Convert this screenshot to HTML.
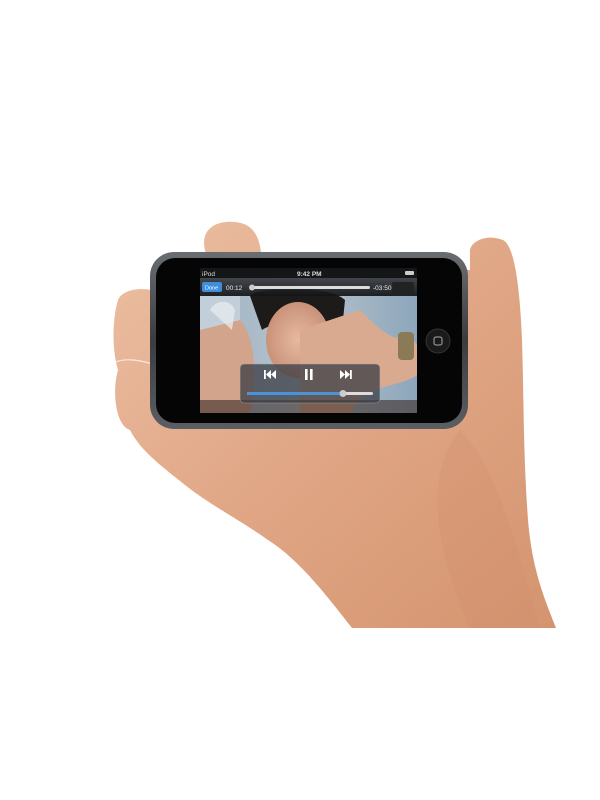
<!DOCTYPE html>
<html><head><style>
html,body{margin:0;padding:0;background:#fff;width:600px;height:800px;overflow:hidden}
svg{display:block}
text{font-family:"Liberation Sans",sans-serif}
</style></head><body>
<svg width="600" height="800" viewBox="0 0 600 800">
<defs>
<linearGradient id="skin" x1="0" y1="0" x2="1" y2="1">
<stop offset="0" stop-color="#ecbfa3"/><stop offset="0.5" stop-color="#e0a685"/><stop offset="1" stop-color="#d4946f"/>
</linearGradient>
<linearGradient id="bez" x1="0" y1="0" x2="0" y2="1">
<stop offset="0" stop-color="#6a6d72"/><stop offset="0.5" stop-color="#3a3c40"/><stop offset="1" stop-color="#5b5e63"/>
</linearGradient>
<linearGradient id="vid" x1="0" y1="0" x2="1" y2="0">
<stop offset="0" stop-color="#9fb4c4"/><stop offset="0.5" stop-color="#b7c3cc"/><stop offset="1" stop-color="#8da6bb"/>
</linearGradient>
<linearGradient id="bar" x1="0" y1="0" x2="0" y2="1">
<stop offset="0" stop-color="#3a3d42"/><stop offset="1" stop-color="#121315"/>
</linearGradient>
<radialGradient id="face" cx="0.5" cy="0.5" r="0.5">
<stop offset="0" stop-color="#e6b9a0"/><stop offset="1" stop-color="#c99279"/>
</radialGradient>
</defs>
<!-- hand -->
<path fill="url(#skin)" d="M210 270 L205 250 C200 230 215 220 235 222 C255 224 262 238 262 270 L470 270 L470 250 C472 240 488 234 503 240 C515 246 520 290 522 340 C524 400 523 450 528 520 C532 570 545 600 556 628 L352 628 C330 600 300 560 268 540 C240 520 210 505 185 485 C160 465 140 450 130 430 C115 425 112 390 118 370 C112 350 112 320 118 300 C122 290 140 286 160 292 L160 270 Z"/>
<path d="M116 362 C125 358 140 360 152 364" stroke="#fff" stroke-width="1.2" fill="none" opacity="0.7"/>
<path fill="#cf8f6c" opacity="0.3" d="M460 430 C500 470 520 560 540 628 L470 628 C440 560 420 480 460 430 Z"/>
<!-- device -->
<rect x="150" y="252" width="318" height="177" rx="24" fill="url(#bez)"/>
<rect x="156" y="258" width="306" height="165" rx="19" fill="#050505"/>
<!-- screen -->
<rect x="200" y="268" width="217" height="145" fill="url(#vid)"/>
<rect x="200" y="296" width="40" height="117" fill="#c2cfd8"/>
<path d="M250 296 C260 285 330 285 345 300 L342 330 C320 318 280 318 262 330 Z" fill="#1d1a1a"/>
<ellipse cx="298" cy="340" rx="32" ry="38" fill="url(#face)"/>
<path d="M200 330 L240 320 C250 330 260 360 250 413 L200 413 Z" fill="#d2a48c"/>
<path d="M300 330 L360 310 C380 330 395 345 410 335 L417 345 L417 375 C395 390 370 380 350 413 L300 413 Z" fill="#d9aa90"/>
<path d="M210 310 C215 300 230 298 235 310 L232 330 Z" fill="#e9eef2" opacity="0.7"/>
<rect x="398" y="332" width="16" height="28" rx="4" fill="#8a7a55"/>
<rect x="200" y="400" width="217" height="13" fill="#3a2c26" opacity="0.6"/>
<!-- bars -->
<rect x="200" y="268" width="217" height="10" fill="#151618"/>
<text x="202" y="276" font-size="6.5" fill="#ddd">iPod</text>
<text x="297" y="276" font-size="6.5" fill="#ddd" font-weight="bold">9:42 PM</text>
<rect x="405" y="271" width="9" height="4" rx="1" fill="#ccc"/>
<rect x="200" y="278" width="217" height="18" fill="url(#bar)" opacity="0.92"/>
<rect x="202" y="282" width="20" height="10" rx="2" fill="#3d8fdc"/>
<text x="205" y="289.5" font-size="5.5" fill="#fff">Done</text>
<text x="226" y="290" font-size="6.5" fill="#eee">00:12</text>
<rect x="250" y="286" width="120" height="3" rx="1.5" fill="#ddd"/>
<circle cx="252" cy="287.5" r="3" fill="#ccc"/>
<text x="373" y="290" font-size="6.5" fill="#eee">-03:50</text>
<rect x="392" y="282" width="22" height="12" rx="2" fill="#222"/>
<!-- overlay controls -->
<rect x="240" y="364" width="140" height="39" rx="4" fill="#3a3d44" opacity="0.75" stroke="#aaa" stroke-width="0.6"/>
<g fill="#fff">
<rect x="264" y="370" width="1.8" height="9"/>
<path d="M266 374.5 L271 370 L271 379 Z M271 374.5 L276 370 L276 379 Z"/>
<rect x="305" y="369" width="2.6" height="11"/><rect x="310" y="369" width="2.6" height="11"/>
<path d="M340 370 L345 374.5 L340 379 Z M345 370 L350 374.5 L345 379 Z"/>
<rect x="350" y="370" width="1.8" height="9"/>
</g>
<rect x="247" y="392" width="126" height="3" rx="1.5" fill="#ddd"/>
<rect x="247" y="392" width="96" height="3" rx="1.5" fill="#4a93d8"/>
<circle cx="343" cy="393.5" r="3.5" fill="#ccc"/>
<!-- home button -->
<circle cx="438" cy="341" r="12" fill="#1a1a1b" stroke="#333" stroke-width="1"/>
<rect x="434" y="337" width="8" height="8" rx="2" fill="none" stroke="#aaa" stroke-width="1"/>
</svg>
</body></html>
